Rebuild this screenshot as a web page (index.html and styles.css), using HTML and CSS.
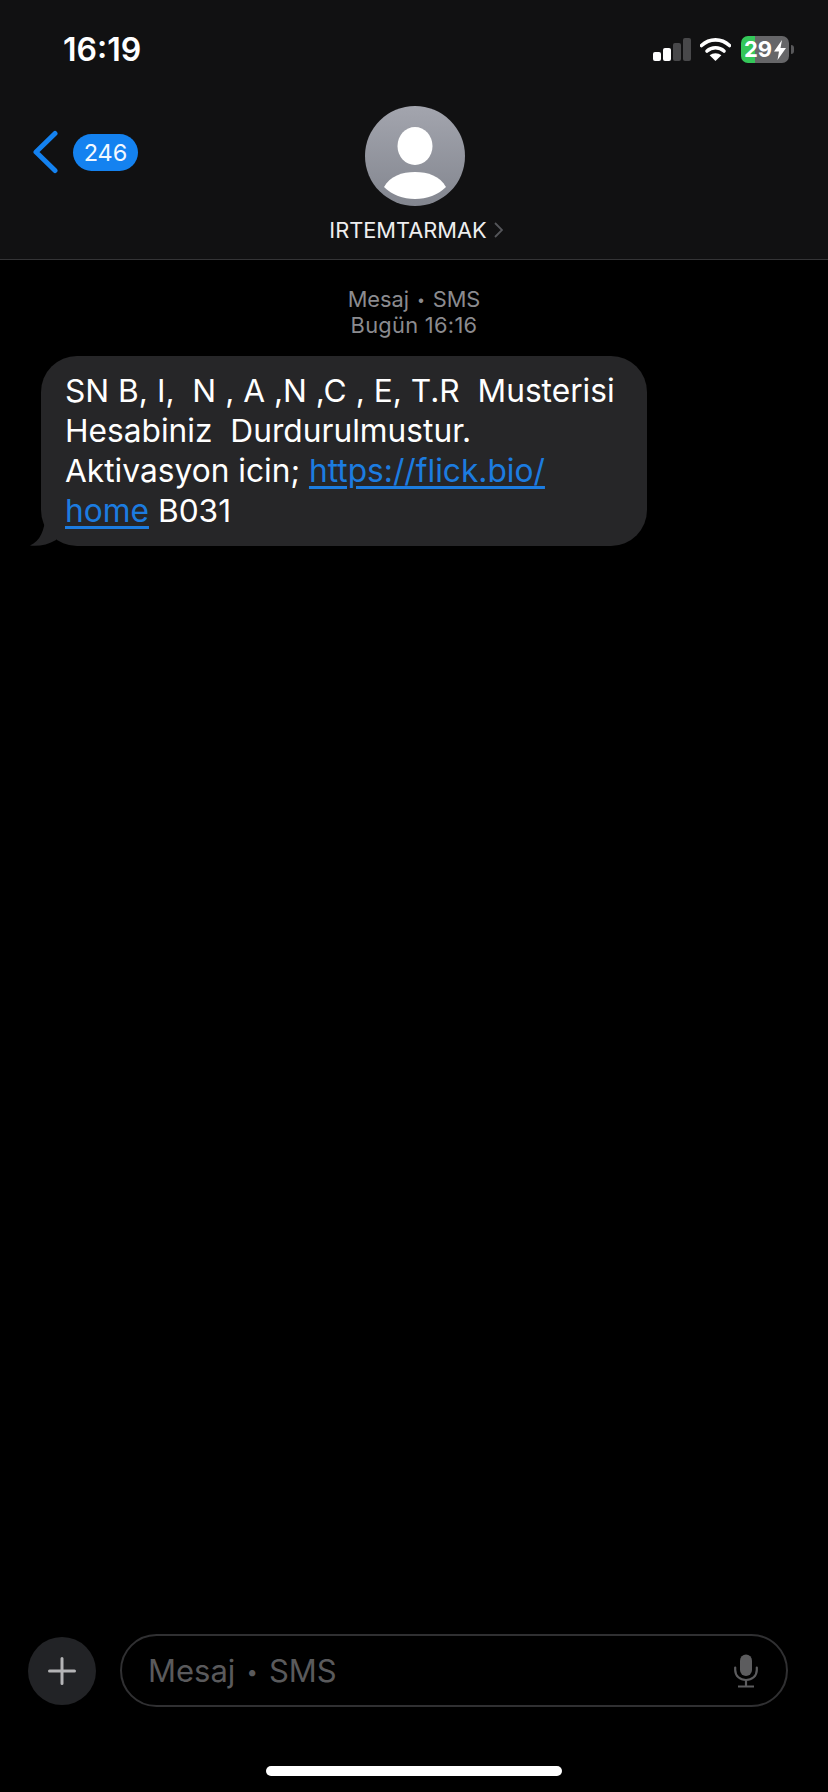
FILE: index.html
```html
<!DOCTYPE html>
<html lang="tr">
<head>
<meta charset="utf-8">
<title>Mesaj</title>
<link rel="stylesheet" href="styles.css">
</head>
<body>
<div class="screen">
  <header class="top">
    <div class="status">
      <span class="time">16:19</span>
      <div class="status-icons">
        <div class="signal">
          <i class="bar b1"></i><i class="bar b2"></i><i class="bar b3"></i><i class="bar b4"></i>
        </div>
        <svg class="wifi" viewBox="0 0 31 24" width="31" height="24">
          <path d="M1.5 8.5C9.5 1 21.5 1 29.5 8.5" fill="none" stroke="#fff" stroke-width="3.6" stroke-linecap="round"/>
          <path d="M7 14C11.8 9.7 19.2 9.7 24 14" fill="none" stroke="#fff" stroke-width="3.6" stroke-linecap="round"/>
          <path d="M15.5 24L9.6 18.2C13 15.5 18 15.5 21.4 18.2Z" fill="#fff"/>
        </svg>
        <div class="battery">
          <div class="cell"><span class="level">29<svg class="bolt" viewBox="0 0 12 20" width="12" height="20"><path d="M8 0L0 11.5H5L3.5 20L12 8H6.5Z" fill="#fff"/></svg></span></div>
          <i class="nub"></i>
        </div>
      </div>
    </div>
    <nav class="nav">
      <div class="back">
        <svg class="chevron" viewBox="0 0 26 44" width="26" height="44">
          <path d="M23 3.5L4 22L23 40.5" fill="none" stroke="#1482f0" stroke-width="5" stroke-linecap="round" stroke-linejoin="round"/>
        </svg>
        <span class="badge">246</span>
      </div>
      <div class="contact">
        <div class="avatar">
          <svg viewBox="0 0 100 100" width="100" height="100">
            <defs>
              <linearGradient id="av" x1="0" y1="0" x2="0" y2="1">
                <stop offset="0" stop-color="#a3a5ae"/>
                <stop offset="1" stop-color="#83868f"/>
              </linearGradient>
            </defs>
            <circle cx="50" cy="50" r="50" fill="url(#av)"/>
            <ellipse cx="50" cy="40" rx="17.5" ry="19" fill="#fff"/>
            <path d="M19 81C25 70 37 66 50 66S75 70 81 81C73 89 62 93 50 93S27 89 19 81Z" fill="#fff"/>
          </svg>
        </div>
        <div class="name">IRTEMTARMAK<svg class="name-chev" viewBox="0 0 9 16" width="9" height="16"><path d="M1 1L8 8L1 15" fill="none" stroke="#55565a" stroke-width="1.8"/></svg></div>
      </div>
      <div class="nav-end"></div>
    </nav>
  </header>

  <main class="thread">
    <div class="meta">
      <div>Mesaj <span class="dot">•</span> SMS</div>
      <div class="meta-date">Bugün 16:16</div>
    </div>
    <div class="bubble">
      <svg class="tail" viewBox="0 0 26 30" width="26" height="30"><path d="M15 0C15 14 10 25 0 29.5C8 30.500 18 29 26 24V0Z" fill="#262628"/></svg>
      <p class="msg">SN B, I,  N , A ,N ,C , E, T.R  Musterisi
Hesabiniz  Durdurulmustur.
Aktivasyon icin; <a class="link" href="#">https://flick.bio/</a>
<a class="link" href="#">home</a> B031</p>
    </div>
  </main>

  <footer class="bottom">
    <div class="composer">
      <button class="plus" type="button">
        <svg viewBox="0 0 28 28" width="28" height="28"><path d="M14 1.5V26.5M1.5 14H26.5" stroke="#b4b4b6" stroke-width="3" stroke-linecap="round"/></svg>
      </button>
      <div class="field">
        <span class="placeholder">Mesaj <span class="dot">•</span> SMS</span>
        <svg class="mic" viewBox="0 0 24 34" width="24" height="34">
          <rect x="6" y="0.5" width="12" height="21.5" rx="6" fill="#5c5c5e"/>
          <path d="M1.2 13.5V16C1.2 22 6 26 12 26S22.800 22 22.800 16V13.500" fill="none" stroke="#5c5c5e" stroke-width="2.200" stroke-linecap="round"/>
          <path d="M12 26V32M4 32.500H20" fill="none" stroke="#5c5c5e" stroke-width="2.200"/>
        </svg>
      </div>
    </div>
    <div class="home"></div>
  </footer>
</div>
</body>
</html>
```

FILE: styles.css
```css
* { box-sizing: border-box; }
html, body { margin: 0; padding: 0; background: #000; }
body { font-family: Inter, "Liberation Sans", sans-serif; color: #fff; }

.screen {
  width: 828px;
  height: 1792px;
  display: flex;
  flex-direction: column;
  background: #000;
  overflow: hidden;
}

.top {
  height: 260px;
  flex: none;
  background: #111112;
  border-bottom: 1px solid #343436;
}

.status {
  height: 100px;
  padding: 36px 34px 0 63px;
  display: flex;
  justify-content: space-between;
  align-items: flex-start;
}
.time { font-size: 32px; line-height: 28px; font-weight: 600; }
.status-icons { display: flex; align-items: flex-start; }
.signal { display: flex; align-items: flex-end; gap: 2px; height: 23px; margin-top: 2px; }
.bar { display: block; width: 8px; border-radius: 2px; background: #fff; }
.b1 { height: 9px; }
.b2 { height: 13px; }
.b3 { height: 18px; background: #48484a; }
.b4 { height: 23px; background: #48484a; }
.wifi { display: block; margin: 1px 10px 0 9px; }
.battery { display: flex; align-items: center; gap: 2px; }
.cell {
  width: 48px;
  height: 27px;
  border-radius: 7px;
  background: linear-gradient(90deg, #34c759 0 14px, #666668 14px);
  display: flex;
  align-items: center;
  justify-content: center;
}
.level { display: flex; align-items: center; gap: 2px; font-size: 22px; line-height: 27px; font-weight: 700; }
.bolt { display: block; }
.nub { display: block; width: 3px; height: 9px; border-radius: 0 3px 3px 0; background: #58585a; }

.nav {
  display: grid;
  grid-template-columns: 1fr auto 1fr;
  align-items: start;
  padding-top: 6px;
}
.back { display: flex; align-items: center; gap: 15px; margin-top: 24px; padding-left: 32px; }
.chevron { display: block; }
.badge {
  width: 65px;
  height: 37px;
  border-radius: 19px;
  background: #1482f0;
  font-size: 23.500px;
  line-height: 37px;
  text-align: center;
  color: #f2f8ff;
}
.contact { display: flex; flex-direction: column; align-items: center; }
.avatar { width: 100px; height: 100px; margin-left: 2px; }
.avatar svg { display: block; }
.name {
  display: flex;
  align-items: center;
  gap: 7px;
  margin-top: 11px;
  padding-left: 4px;
  font-size: 21.800px;
  line-height: 26px;
  color: #eeeeef;
}
.name-chev { display: block; }

.thread { flex: 1; min-height: 0; padding: 26px 0 0 41px; }
.meta {
  margin-left: -41px;
  text-align: center;
  font-size: 21.800px;
  line-height: 26px;
  color: #8b8b8f;
}
.meta-date { letter-spacing: 0.3px; }
.dot { font-size: 0.65em; line-height: 0; vertical-align: 0.14em; margin: 0 0.12em; }
.bubble {
  position: relative;
  width: 606px;
  height: 190px;
  margin-top: 18px;
  padding: 15px 24px;
  border-radius: 36px;
  background: #262628;
}
.tail { position: absolute; left: -11px; bottom: 0; display: block; }
.msg {
  position: relative;
  margin: 0;
  white-space: pre;
  font-size: 31.700px;
  line-height: 40px;
  color: #fff;
}
.link { color: #1c7ce0; text-decoration: underline; text-underline-offset: 4px; }

.bottom { flex: none; height: 158px; padding-left: 28px; }
.composer { display: flex; align-items: center; gap: 24px; height: 73px; }
.plus {
  flex: none;
  width: 68px;
  height: 68px;
  padding: 0;
  border: 0;
  border-radius: 50%;
  background: #222326;
  display: flex;
  align-items: center;
  justify-content: center;
}
.plus svg { display: block; }
.field {
  width: 668px;
  height: 73px;
  padding: 0 28px 0 26px;
  border: 2px solid #303032;
  border-radius: 37px;
  display: flex;
  align-items: center;
  justify-content: space-between;
}
.placeholder { font-size: 31px; line-height: 40px; color: #5a5a5c; }
.mic { display: block; }
.home {
  width: 296px;
  height: 10px;
  margin: 59px 0 0 238px;
  border-radius: 5px;
  background: #fff;
}
```
